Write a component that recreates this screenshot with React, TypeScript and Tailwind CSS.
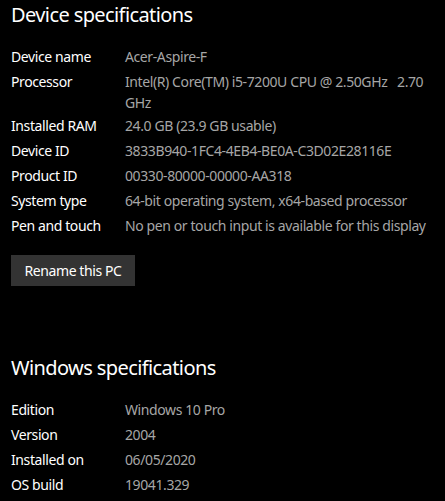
type Row = { label: string; value: string; wraps?: boolean };

const device: Row[] = [
  { label: 'Device name', value: 'Acer-Aspire-F' },
  { label: 'Processor', value: 'Intel(R) Core(TM) i5-7200U CPU @ 2.50GHz   2.70 GHz', wraps: true },
  { label: 'Installed RAM', value: '24.0 GB (23.9 GB usable)' },
  { label: 'Device ID', value: '3833B940-1FC4-4EB4-BE0A-C3D02E28116E' },
  { label: 'Product ID', value: '00330-80000-00000-AA318' },
  { label: 'System type', value: '64-bit operating system, x64-based processor' },
  { label: 'Pen and touch', value: 'No pen or touch input is available for this display' },
];

const windows: Row[] = [
  { label: 'Edition', value: 'Windows 10 Pro' },
  { label: 'Version', value: '2004' },
  { label: 'Installed on', value: '06/05/2020' },
  { label: 'OS build', value: '19041.329' },
];

function SpecRows({ rows }: { rows: Row[] }) {
  return (
    <div className="flex flex-col">
      {rows.map((r) => (
        <div
          key={r.label}
          className={`flex pt-[2px] text-[14px] leading-[21px] tracking-[-0.4px] ${r.wraps ? 'pb-0' : 'pb-[2px]'}`}
        >
          <div className="w-[114px] shrink-0 text-white">{r.label}</div>
          <div className="flex-1 whitespace-pre-wrap text-[#a6a6a6]">{r.value}</div>
        </div>
      ))}
    </div>
  );
}

export default function App() {
  return (
    <div className="min-h-[501px] w-[445px] overflow-hidden bg-black px-[11px] font-['Noto_Sans',sans-serif]">
      <h2 className="text-[20px] leading-[30px] tracking-[-0.6px] text-white">Device specifications</h2>
      <div className="mt-[14px]">
        <SpecRows rows={device} />
      </div>
      <button className="mt-[17px] h-[31px] w-[124px] bg-[#333333] text-[14px] tracking-[-0.4px] text-white">
        Rename this PC
      </button>

      <h2 className="mt-[67px] text-[20px] leading-[30px] tracking-[-0.6px] text-white">Windows specifications</h2>
      <div className="mt-[14px]">
        <SpecRows rows={windows} />
      </div>
    </div>
  );
}
